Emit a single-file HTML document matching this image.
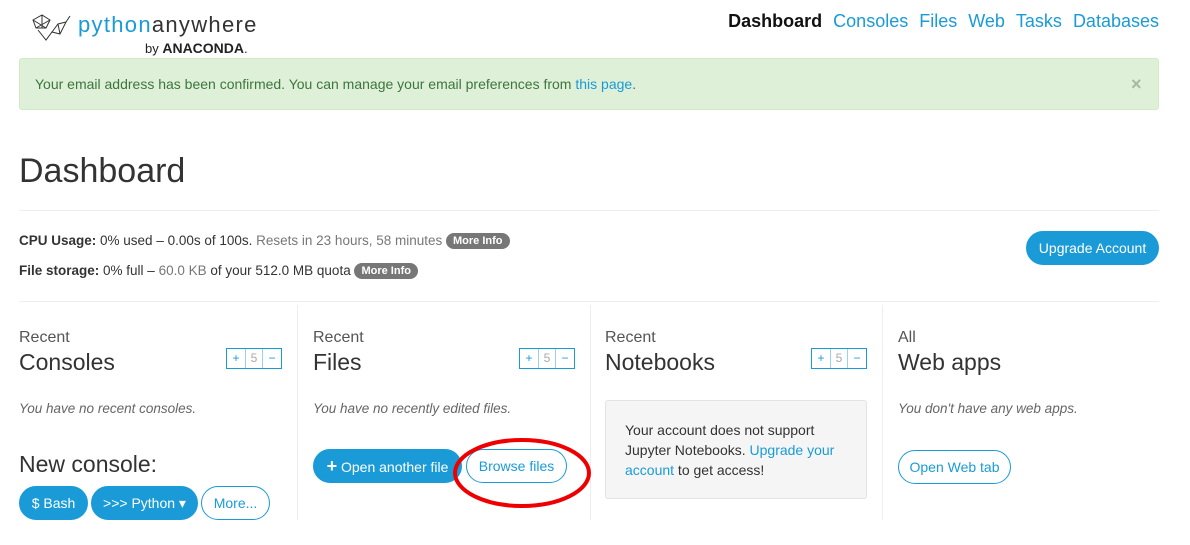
<!DOCTYPE html>
<html><head><style>
*{box-sizing:border-box;margin:0;padding:0}
body{width:1190px;height:545px;overflow:hidden;background:#fff;font-family:"Liberation Sans",sans-serif;color:#333;position:relative;font-size:14px}
.a{position:absolute;white-space:nowrap}
.nav a{color:#1a9bd7;text-decoration:none;font-size:18px;margin-left:11px}
.lnk{color:#1a9bd7}
.badge{display:inline-block;background:#777;color:#fff;font-weight:bold;font-size:11px;padding:2px 7px;border-radius:9px;vertical-align:1px}
.sm{color:#555;font-size:16px}
.big{font-size:23px;color:#333}
.it{font-style:italic;color:#666;font-size:13.5px}
.pm{position:absolute;display:flex;border:1px solid #1a9bd7;height:21px}
.pm span{width:18px;text-align:center;font-size:12px;line-height:19px;color:#1a9bd7}
.pm span.m{color:#aaa;border-left:1px solid #9cd3ec;border-right:1px solid #9cd3ec}
.btn{position:absolute;border-radius:17px;height:34px;line-height:32px;font-size:14px;text-align:center;border:1px solid #1a9bd7}
.fill{background:#1a9bd7;color:#fff}
.out{background:#fff;color:#1a9bd7}
.vl{position:absolute;top:305px;height:215px;width:1px;background:#eee}
</style></head><body>
<svg class="a" style="left:30px;top:12px" width="44" height="32" viewBox="0 0 44 32" fill="none" stroke="#333" stroke-width="1"><path d="M3 8L12 3L20 8L16 16L6 16Z M12 3L12 16 M3 8L16 16 M20 8L6 16 M8 18L16 28L22 20L30 22L36 10L28 12L22 20 M36 10L40 4 M30 22L28 12"/></svg>
<div class="a" style="left:78px;top:12px;font-size:22px;letter-spacing:1.3px"><span style="color:#1a9bd7">python</span><span style="color:#333">anywhere</span></div>
<div class="a" style="left:145px;top:40px;font-size:13px;color:#222">by <b style="font-size:14px">ANACONDA</b>.</div>
<div class="a nav" style="right:31px;top:11px"><a style="color:#111;font-weight:bold">Dashboard</a><a>Consoles</a><a>Files</a><a>Web</a><a>Tasks</a><a>Databases</a></div>
<div class="a" style="left:19px;top:58px;width:1140px;height:52px;background:#dff0d8;border:1px solid #d0e9c6;border-radius:3px"></div>
<div class="a" style="left:35px;top:76px;color:#3c763d;font-size:14px">Your email address has been confirmed. You can manage your email preferences from <span class="lnk">this page</span>.</div>
<div class="a" style="left:1131px;top:74px;color:#a9b8a2;font-size:18px;font-weight:bold">×</div>
<div class="a" style="left:19px;top:152px;font-size:34px;color:#333">Dashboard</div>
<div class="a" style="left:19px;top:210px;width:1140px;height:1px;background:#eee"></div>
<div class="a" style="left:19px;top:233px;font-size:13.5px"><b>CPU Usage:</b> 0% used – 0.00s of 100s. <span style="color:#777">Resets in 23 hours, 58 minutes</span> <span class="badge">More Info</span></div>
<div class="a" style="left:19px;top:263px;font-size:13.5px"><b>File storage:</b> 0% full – <span style="color:#777">60.0 KB</span> of your 512.0 MB quota <span class="badge">More Info</span></div>
<div class="btn fill" style="left:1026px;top:231px;width:133px;height:34px">Upgrade Account</div>
<div class="a" style="left:19px;top:301px;width:1140px;height:1px;background:#eee"></div>
<div class="vl" style="left:297px"></div><div class="vl" style="left:590px"></div><div class="vl" style="left:882px"></div>

<div class="a sm" style="left:19px;top:329px">Recent</div><div class="a big" style="left:19px;top:349px">Consoles</div>
<div class="pm" style="left:226px;top:348px"><span>+</span><span class="m">5</span><span>−</span></div>
<div class="a it" style="left:19px;top:401px">You have no recent consoles.</div>
<div class="a big" style="left:19px;top:451px">New console:</div>
<div class="btn fill" style="left:19px;top:486px;width:69px">$ Bash</div>
<div class="btn fill" style="left:91px;top:486px;width:107px">&gt;&gt;&gt; Python ▾</div>
<div class="btn out" style="left:201px;top:486px;width:69px">More...</div>

<div class="a sm" style="left:313px;top:329px">Recent</div><div class="a big" style="left:313px;top:349px">Files</div>
<div class="pm" style="left:519px;top:348px"><span>+</span><span class="m">5</span><span>−</span></div>
<div class="a it" style="left:313px;top:401px">You have no recently edited files.</div>
<div class="btn fill" style="left:313px;top:449px;width:149px"><b style="font-size:18px">+</b> Open another file</div>
<div class="btn out" style="left:466px;top:449px;width:101px">Browse files</div>
<svg class="a" style="left:452px;top:437px" width="140" height="72"><ellipse cx="70" cy="36" rx="67" ry="33" fill="none" stroke="#e00" stroke-width="4"/></svg>

<div class="a sm" style="left:605px;top:329px">Recent</div><div class="a big" style="left:605px;top:349px">Notebooks</div>
<div class="pm" style="left:811px;top:348px"><span>+</span><span class="m">5</span><span>−</span></div>
<div class="a" style="left:605px;top:400px;width:262px;height:99px;background:#f5f5f5;border:1px solid #e3e3e3;border-radius:3px"></div>
<div class="a" style="left:625px;top:420px;font-size:14px;line-height:20px;white-space:normal;width:230px">Your account does not support Jupyter Notebooks. <span class="lnk">Upgrade your account</span> to get access!</div>

<div class="a sm" style="left:898px;top:329px">All</div><div class="a big" style="left:898px;top:349px">Web apps</div>
<div class="a it" style="left:898px;top:401px">You don't have any web apps.</div>
<div class="btn out" style="left:898px;top:450px;width:113px">Open Web tab</div>
</body></html>
